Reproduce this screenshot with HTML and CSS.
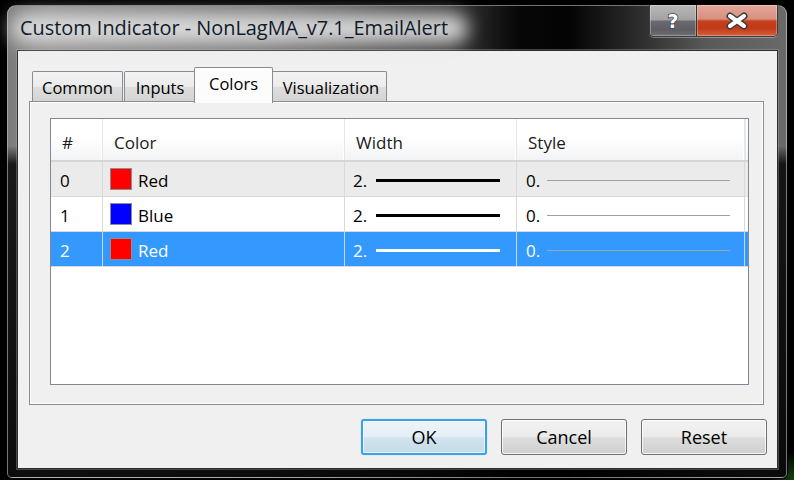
FILE: index.html
```html
<!DOCTYPE html>
<html>
<head>
<meta charset="utf-8">
<link rel="stylesheet" href="styles.css">
</head>
<body>
<div class="window">
  <div class="titlebar">
    <div class="title"><span class="glow"></span><span class="title-text">Custom Indicator - NonLagMA_v7.1_EmailAlert</span></div>
    <div class="caption-btns">
      <div class="cbtn help">?</div>
      <div class="cbtn close">
        <svg width="28" height="18" viewBox="0 0 28 18"><path d="M7 4 L21 14 M21 4 L7 14" stroke="#3b3b44" stroke-width="7" stroke-linecap="round" fill="none"/><path d="M7 4 L21 14 M21 4 L7 14" stroke="#fff" stroke-width="4" stroke-linecap="round" fill="none"/></svg>
      </div>
    </div>
  </div>
  <div class="client">
    <div class="tabs">
      <div class="tab t-common">Common</div>
      <div class="tab t-inputs">Inputs</div>
      <div class="tab t-colors active">Colors</div>
      <div class="tab t-vis">Visualization</div>
    </div>
    <div class="panel">
      <div class="list">
        <div class="row hdr">
          <div class="cell c-num">#</div>
          <div class="cell c-color">Color</div>
          <div class="cell c-width">Width</div>
          <div class="cell c-style">Style</div>
        </div>
        <div class="row r-hot">
          <div class="cell c-num">0</div>
          <div class="cell c-color"><span class="swatch red"></span>Red</div>
          <div class="cell c-width">2.<span class="wline"></span></div>
          <div class="cell c-style">0.<span class="sline"></span></div>
        </div>
        <div class="row">
          <div class="cell c-num">1</div>
          <div class="cell c-color"><span class="swatch blue"></span>Blue</div>
          <div class="cell c-width">2.<span class="wline"></span></div>
          <div class="cell c-style">0.<span class="sline"></span></div>
        </div>
        <div class="row r-sel">
          <div class="cell c-num">2</div>
          <div class="cell c-color"><span class="swatch red"></span>Red</div>
          <div class="cell c-width">2.<span class="wline"></span></div>
          <div class="cell c-style">0.<span class="sline"></span></div>
        </div>
      </div>
    </div>
    <div class="buttons">
      <div class="btn default">OK</div>
      <div class="btn">Cancel</div>
      <div class="btn">Reset</div>
    </div>
  </div>
</div>
</body>
</html>
```
FILE: styles.css
```css
html, body {
  margin: 0;
  padding: 0;
}
body {
  width: 794px;
  height: 480px;
  overflow: hidden;
  background:
    radial-gradient(circle at 792px 478px, rgba(40, 110, 30, 0.55), rgba(0,0,0,0) 26px),
    #000;
  font-family: "Open Sans", "Noto Sans", "Liberation Sans", sans-serif;
  color: #000;
}
.window {
  box-sizing: border-box;
  margin: 5px 0 0 7px;
  width: 780px;
  height: 473px;
  border: 1px solid rgba(210, 210, 210, 0.55);
  border-radius: 9px 9px 5px 5px;
  box-shadow: 0 0 0 1px #000;
  padding: 0 8px 8px 9px;
  display: flex;
  flex-direction: column;
  background:
    linear-gradient(to bottom, rgba(0,0,0,0) 0, rgba(0,0,0,0) 140px, rgba(0,0,0,0.8) 158px, rgba(0,0,0,0.9) 100%),
    linear-gradient(to right, #7c7c7c 0, #8e8e8e 40px, #767676 250px, #3a3a3a 440px, #070707 510px, #030303 560px, #2c2c2c 630px, #5a5a5a 700px, #6a6a6a 780px);
  position: relative;
}
.titlebar {
  height: 44px;
  display: flex;
  flex-shrink: 0;
}
.title {
  position: relative;
  margin-top: 10px;
  padding-left: 3px;
  height: 24px;
  line-height: 24px;
}
.glow {
  position: absolute;
  left: -6px;
  right: -20px;
  top: -2px;
  bottom: -3px;
  background: rgba(228, 228, 228, 0.9);
  border-radius: 16px;
  filter: blur(9px);
}
.title-text {
  position: relative;
  font-size: 19.9px;
  color: #0f1a2a;
  white-space: nowrap;
}
.caption-btns {
  margin-left: auto;
  margin-top: -1px;
  height: 32px;
  display: flex;
  box-sizing: border-box;
  border: 1px solid #3a3a3a;
  border-top: none;
  border-radius: 0 0 5px 5px;
  overflow: hidden;
  box-shadow: 0 1px 0 rgba(255,255,255,0.35);
}
.cbtn {
  height: 100%;
  display: flex;
  align-items: center;
  justify-content: center;
  box-shadow: inset 0 0 0 1px rgba(255,255,255,0.3);
}
.help {
  width: 46px;
  background: linear-gradient(to bottom, #b8b8b8 0, #a2a2a2 48%, #6a6a70 52%, #5e5e64 80%, #6e6e74 100%);
  border-right: 1px solid #333;
  color: #fff;
  font-family: "DejaVu Sans", sans-serif;
  font-weight: bold;
  font-size: 19px;
  -webkit-text-stroke: 1.5px #40404c;
  paint-order: stroke fill;
}
.close {
  width: 80px;
  background: linear-gradient(to bottom, #e3a89c 0, #d98f7e 45%, #c5401e 52%, #c23a18 75%, #d4603f 100%);
}
.client {
  flex: 1;
  box-sizing: border-box;
  border: 1px solid #2e2e2e;
  box-shadow: 0 0 0 1px rgba(180,180,180,0.35);
  background: #f0f0f0;
  padding: 16px 10px 0 11px;
  display: flex;
  flex-direction: column;
}
.tabs {
  height: 34px;
  display: flex;
  align-items: flex-end;
  padding-left: 3px;
  position: relative;
  z-index: 2;
}
.tab {
  box-sizing: border-box;
  height: 30px;
  border: 1px solid #898c95;
  border-bottom: none;
  border-radius: 2px 2px 0 0;
  background: linear-gradient(to bottom, #f3f3f3 0, #ebebeb 50%, #dddddd 52%, #d4d4d4 100%);
  font-size: 16.5px;
  line-height: 31px;
  text-align: center;
  white-space: nowrap;
}
.t-common { width: 91px; }
.t-inputs { width: 72px; margin-left: 1px; }
.t-colors { width: 75px; }
.t-vis { width: 116px; padding-left: 4px; }
.tab.active {
  height: 36px;
  margin: 0 -2px -2px -2px;
  width: 79px;
  background: #fcfcfc;
  line-height: 32px;
  position: relative;
  z-index: 3;
}
.panel {
  box-sizing: border-box;
  height: 304px;
  margin-right: 3px;
  border: 1px solid #898c95;
  box-shadow: inset 0 0 0 1px #fff;
  background: #f0f0f0;
  padding: 16px 14px 19px 20px;
  display: flex;
  flex-direction: column;
}
.list {
  flex: 1;
  border: 1px solid #828790;
  background: #fff;
}
.row {
  display: flex;
  height: 35px;
  box-sizing: border-box;
  border-bottom: 1px solid #d9d9d9;
  font-size: 17px;
}
.cell {
  box-sizing: border-box;
  display: flex;
  align-items: center;
  padding-left: 8px;
  padding-top: 2px;
  border-right: 1px solid #d9d9d9;
  white-space: nowrap;
}
.c-num { width: 52px; padding-left: 9px; }
.c-color { width: 242px; padding-left: 7px; }
.c-width { width: 172px; padding-right: 16px; }
.c-style { width: 228px; padding-left: 9px; padding-right: 14px; }
.hdr {
  height: 43px;
  border-bottom: 2px solid #d5d5d5;
  background: linear-gradient(to bottom, #ffffff 0, #ffffff 45%, #f3f4f6 100%);
  color: #1a1a1a;
}
.hdr .cell {
  padding-left: 11px;
  padding-top: 5px;
  border-right: 1px solid #e4e7ec;
  box-shadow: inset -1px 0 0 #fff;
}
.hdr .c-style { width: 229px; border-right: 2px solid #e4e7ec; }
.r-hot { background: #ebebeb; }
.r-sel { background: #3399ff; color: #fff; }
.r-sel .cell { border-right-color: #c9d9ea; }
.swatch {
  box-sizing: border-box;
  width: 22px;
  height: 22px;
  border: 1px solid #8d8d8d;
  margin-right: 6px;
  margin-top: -2px;
}
.swatch.red { background: #ff0000; }
.swatch.blue { background: #0000ff; }
.wline {
  margin-left: auto;
  width: 124px;
  height: 3px;
  background: #000;
}
.r-sel .wline { background: #fff; }
.sline {
  margin-left: auto;
  width: 183px;
  height: 1px;
  background: #a0a0a0;
}
.r-sel .sline { background: #9aa6b4; }
.buttons {
  display: flex;
  justify-content: flex-end;
  gap: 14px;
  margin-top: 14px;
}
.btn {
  box-sizing: border-box;
  width: 126px;
  height: 36px;
  border: 1px solid #707070;
  border-radius: 3px;
  background: linear-gradient(to bottom, #f2f2f2 0, #ebebeb 50%, #dddddd 52%, #cfcfcf 100%);
  box-shadow: inset 0 0 0 1px rgba(255,255,255,0.8);
  font-size: 18px;
  line-height: 34px;
  text-align: center;
}
.btn.default {
  border: 2px solid #3aa2e8;
  line-height: 32px;
  background: linear-gradient(to bottom, #eef5fa 0, #e4eef5 50%, #d2e3ee 52%, #c4dbe8 100%);
  box-shadow: inset 0 0 0 1px rgba(255,255,255,0.6), 0 0 1px #6fc0f0;
}
```
